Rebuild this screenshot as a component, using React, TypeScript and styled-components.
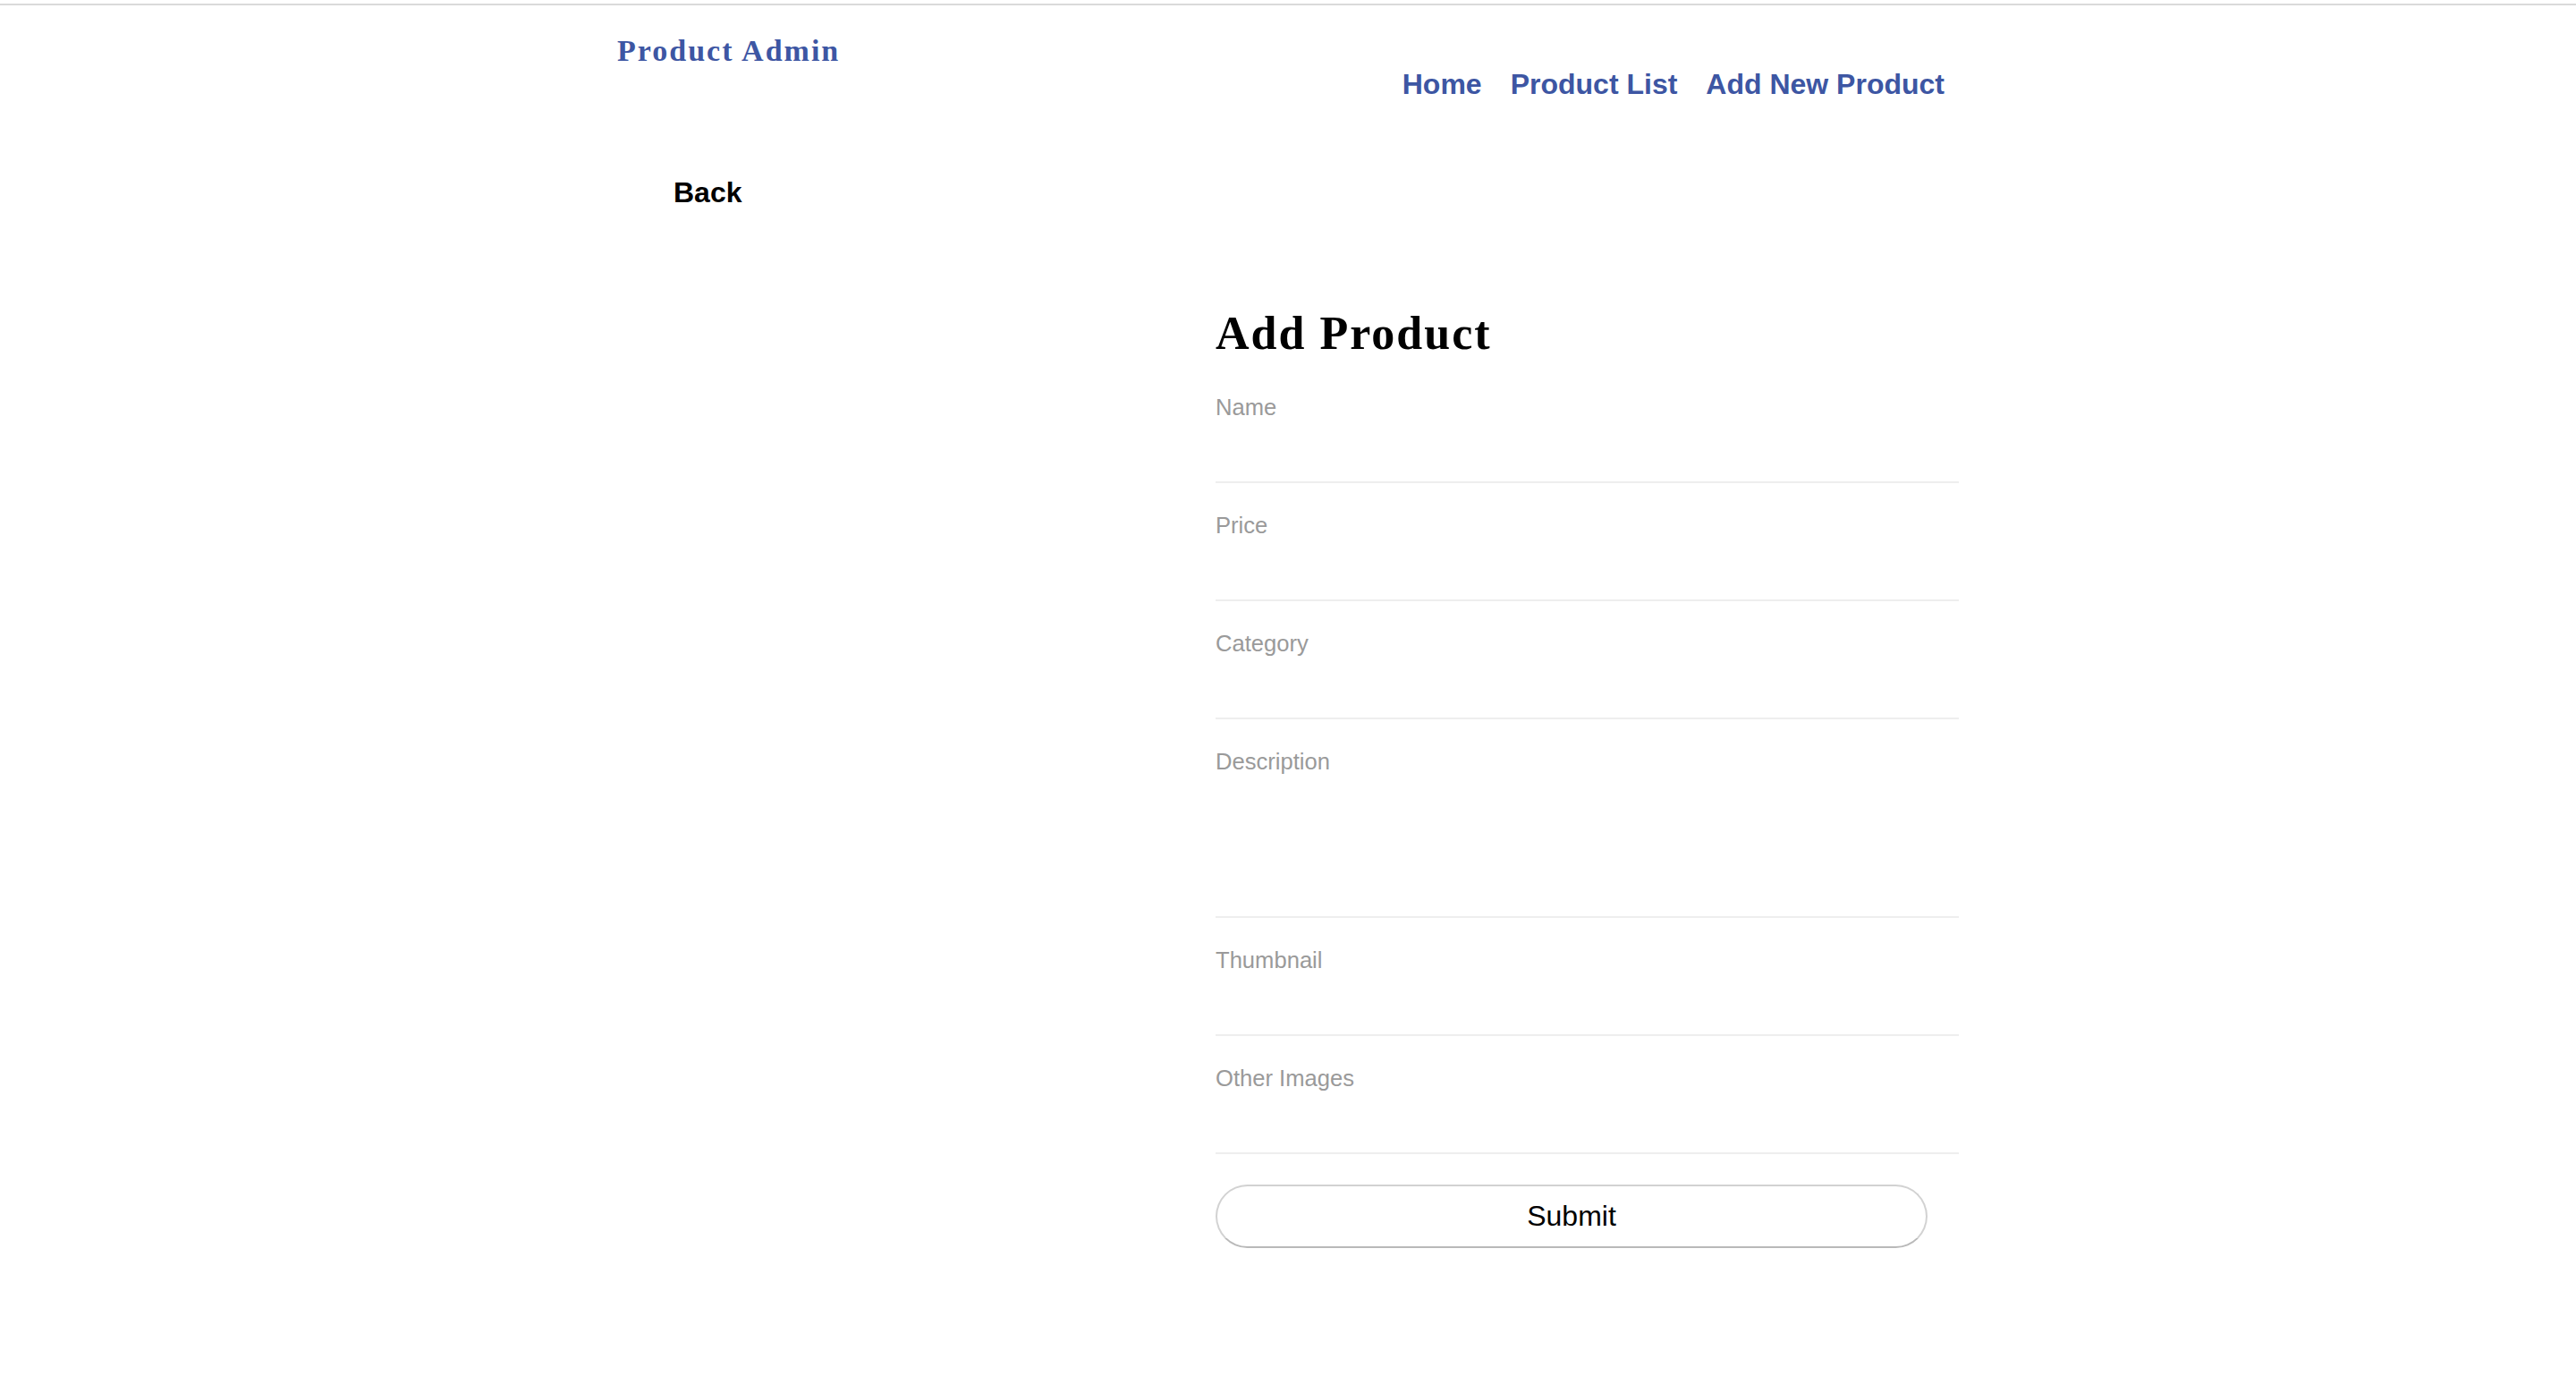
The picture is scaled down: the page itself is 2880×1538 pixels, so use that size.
import React from "react";
import styled, { createGlobalStyle } from "styled-components";

const GlobalStyle = createGlobalStyle`
  html, body {
    margin: 0;
    padding: 0;
    background: #ffffff;
  }
  body {
    font-family: "Liberation Sans", Arial, sans-serif;
    color: #000;
  }
  * { box-sizing: border-box; }
`;

const Page = styled.div`
  min-height: 100vh;
  padding-top: 4px;
  background: #fff;
`;

const TopRule = styled.div`
  height: 2px;
  background: #dadada;
`;

const Container = styled.div`
  width: 1500px;
  margin: 0 auto;
`;

const Header = styled.header`
  display: flex;
  justify-content: space-between;
  align-items: flex-start;
`;

const Brand = styled.a`
  display: block;
  margin-top: 31px;
  font-family: "Liberation Serif", Georgia, serif;
  font-weight: 700;
  font-size: 34px;
  line-height: 40px;
  letter-spacing: 2px;
  color: #3d56a3;
  text-decoration: none;
`;

const Nav = styled.nav`
  display: flex;
  margin-top: 68px;
`;

const NavLink = styled.a`
  padding: 0 16px;
  font-family: "Liberation Sans", Arial, sans-serif;
  font-weight: 700;
  font-size: 32px;
  line-height: 40px;
  color: #3d56a3;
  text-decoration: none;
`;

const BackButton = styled.button`
  display: block;
  margin: 81px 0 0 63px;
  padding: 0;
  border: none;
  background: none;
  font-family: "Liberation Sans", Arial, sans-serif;
  font-weight: 700;
  font-size: 32px;
  line-height: 40px;
  color: #000;
  cursor: pointer;
`;

const FormSection = styled.section`
  width: 831px;
  margin: 108px 0 0 669px;
  padding-bottom: 80px;
`;

const Title = styled.h1`
  margin: 0 0 5px;
  font-family: "Liberation Serif", Georgia, serif;
  font-weight: 700;
  font-size: 52px;
  line-height: 60px;
  letter-spacing: 2px;
  color: #000;
`;

const Field = styled.div`
  padding-top: 32px;
`;

const Label = styled.label`
  display: block;
  font-family: "Liberation Sans", Arial, sans-serif;
  font-size: 25.6px;
  line-height: 30px;
  color: #9a9a9a;
`;

const TextInput = styled.input`
  display: block;
  width: 100%;
  height: 70px;
  border: none;
  border-bottom: 2px solid #eeeeee;
  outline: none;
  background: transparent;
  font-family: "Liberation Sans", Arial, sans-serif;
  font-size: 25.6px;
`;

const TextArea = styled.textarea`
  display: block;
  width: 100%;
  height: 160px;
  border: none;
  border-bottom: 2px solid #eeeeee;
  outline: none;
  resize: none;
  background: transparent;
  font-family: "Liberation Sans", Arial, sans-serif;
  font-size: 25.6px;
`;

const SubmitButton = styled.button`
  display: block;
  width: 796px;
  height: 71px;
  margin-top: 34px;
  border: 2px solid #d2d2d2;
  border-bottom-color: #b9b9b9;
  border-radius: 40px;
  background: #fff;
  font-family: "Liberation Sans", Arial, sans-serif;
  font-size: 32px;
  color: #000;
  cursor: pointer;
`;

const fields: { id: string; label: string; multiline?: boolean }[] = [
  { id: "name", label: "Name" },
  { id: "price", label: "Price" },
  { id: "category", label: "Category" },
  { id: "description", label: "Description", multiline: true },
  { id: "thumbnail", label: "Thumbnail" },
  { id: "images", label: "Other Images" },
];

export default function App() {
  return (
    <>
      <GlobalStyle />
      <Page>
        <TopRule />
        <Container>
          <Header>
            <Brand href="#">Product Admin</Brand>
            <Nav>
              <NavLink href="#">Home</NavLink>
              <NavLink href="#">Product List</NavLink>
              <NavLink href="#">Add New Product</NavLink>
            </Nav>
          </Header>
          <BackButton type="button">Back</BackButton>
          <FormSection>
            <Title>Add Product</Title>
            <form onSubmit={(e) => e.preventDefault()}>
              {fields.map((f) => (
                <Field key={f.id}>
                  <Label htmlFor={f.id}>{f.label}</Label>
                  {f.multiline ? <TextArea id={f.id} /> : <TextInput id={f.id} />}
                </Field>
              ))}
              <SubmitButton type="submit">Submit</SubmitButton>
            </form>
          </FormSection>
        </Container>
      </Page>
    </>
  );
}
